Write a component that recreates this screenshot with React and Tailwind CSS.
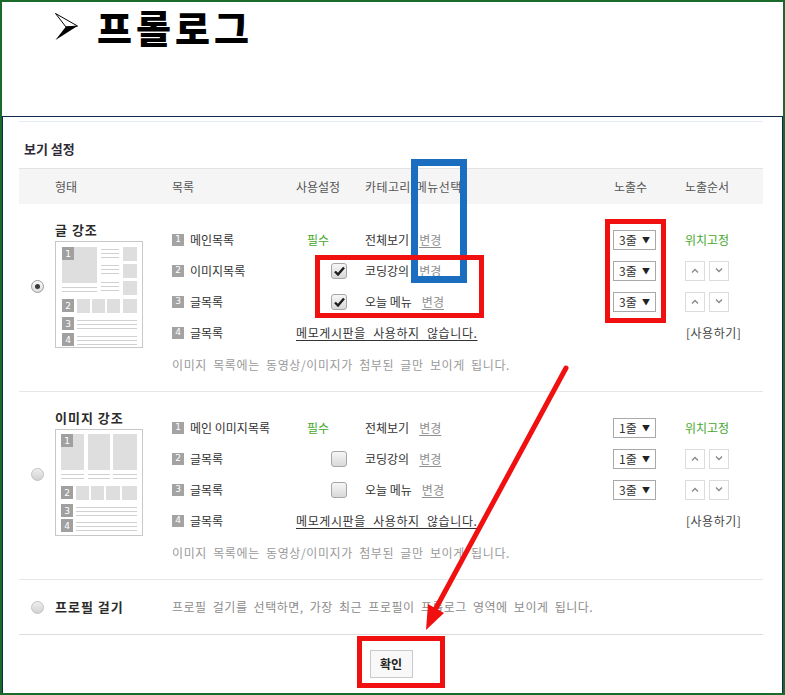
import React from 'react'

const KR = { fontFamily: '"Noto Sans CJK KR", "Noto Sans", sans-serif' }

const Badge = ({ n }) => (
  <span className='inline-flex items-center justify-center w-[12px] h-[12px] bg-[#a3a3a3] text-white text-[9px] leading-none mr-[6px] font-["DejaVu_Sans",sans-serif]'>{n}</span>
)

const Radio = ({ checked }) => (
  <span className={'flex items-center justify-center w-[13px] h-[13px] rounded-full border ' + (checked ? 'border-[#9c9c9c] bg-gradient-to-b from-[#fafafa] to-[#dcdcdc]' : 'border-[#c2c2c2] bg-gradient-to-b from-[#eeeeee] to-[#d2d2d2]')}>
    {checked && <span className='w-[5px] h-[5px] rounded-full bg-[#3a3a3a]'></span>}
  </span>
)

const Check = ({ checked }) => (
  <span className='flex items-center justify-center w-[16px] h-[16px] rounded-[3px] border border-[#a6a6a6] bg-gradient-to-b from-[#f6f6f6] to-[#d9d9d9]'>
    {checked && (
      <svg width='11' height='10' viewBox='0 0 11 10'>
        <path d='M1 5.5 L4 8.5 L10 1.5' fill='none' stroke='#1e1e1e' strokeWidth='2.4' />
      </svg>
    )}
  </span>
)

const Select = ({ v }) => (
  <span className='flex items-center justify-between w-[43px] h-[20px] border border-[#a9a9a9] bg-white px-[5px] text-[12px] text-[#333] leading-none'>
    {v}<span className='text-[8px] text-[#222]'>▼</span>
  </span>
)

const Chevron = ({ up }) => (
  <span className='flex items-center justify-center w-[20px] h-[20px] border border-[#dcdcdc] bg-white'>
    <svg width='8' height='5' viewBox='0 0 8 5'>
      <path d={up ? 'M1 4.5 L4 1.5 L7 4.5' : 'M1 0.5 L4 3.5 L7 0.5'} fill='none' stroke='#8a8a8a' strokeWidth='1.4' />
    </svg>
  </span>
)

const lines = (x1, x2, ys) => ys.map((y) => <line key={x1 + '-' + y} x1={x1} x2={x2} y1={y + 0.5} y2={y + 0.5} stroke='#d0d0d0' strokeWidth='1' />)

const B = ({ x, y, n }) => (
  <g>
    <rect x={x} y={y} width='12' height='13' fill='#a0a0a0' />
    <text x={x + 6} y={y + 10} fontSize='9' fill='#fff' textAnchor='middle' fontFamily='DejaVu Sans'>{n}</text>
  </g>
)

const ThumbText = () => (
  <svg width='88' height='107' viewBox='0 0 88 107'>
    <rect x='0.5' y='0.5' width='87' height='106' fill='#fff' stroke='#c8c8c8' />
    <rect x='7' y='6' width='35' height='36' fill='#dedede' />
    <B x={7} y={6} n='1' />
    {lines(7, 42, [46, 50])}
    {lines(46, 64, [8, 12, 16, 24, 28, 32, 41, 45, 49])}
    <rect x='68' y='6' width='14' height='14' fill='#dedede' />
    <rect x='68' y='23' width='14' height='14' fill='#dedede' />
    <rect x='68' y='40' width='14' height='14' fill='#dedede' />
    <B x={7} y={58} n='2' />
    <rect x='22' y='58' width='13' height='14' fill='#dedede' />
    <rect x='37' y='58' width='13' height='14' fill='#dedede' />
    <rect x='52' y='58' width='13' height='14' fill='#dedede' />
    <rect x='68' y='58' width='14' height='14' fill='#dedede' />
    <B x={7} y={76} n='3' />
    {lines(22, 82, [79, 83, 87])}
    <B x={7} y={92} n='4' />
    {lines(22, 82, [95, 99, 103])}
  </svg>
)

const ThumbImage = () => (
  <svg width='88' height='107' viewBox='0 0 88 107'>
    <rect x='0.5' y='0.5' width='87' height='106' fill='#fff' stroke='#c8c8c8' />
    <rect x='6' y='5' width='23' height='36' fill='#dedede' />
    <rect x='33' y='5' width='22' height='36' fill='#dedede' />
    <rect x='58' y='5' width='24' height='36' fill='#dedede' />
    <B x={6} y={5} n='1' />
    {lines(6, 29, [45, 49])}
    {lines(33, 55, [45, 49])}
    {lines(58, 82, [45, 49])}
    <B x={6} y={57} n='2' />
    <rect x='21' y='57' width='13' height='14' fill='#dedede' />
    <rect x='36' y='57' width='13' height='14' fill='#dedede' />
    <rect x='51' y='57' width='14' height='14' fill='#dedede' />
    <rect x='67' y='57' width='15' height='14' fill='#dedede' />
    <B x={6} y={75} n='3' />
    {lines(21, 82, [78, 82, 86])}
    <B x={6} y={90} n='4' />
    {lines(21, 82, [93, 97, 101])}
  </svg>
)

const Link = ({ children }) => <span className='ml-[10px] text-[#8f8f8f] underline underline-offset-2'>{children}</span>

const Row = ({ n, label, use, cat, count, order }) => (
  <div className='grid grid-cols-[124px_69px_248px_72px_77px] h-[31px] items-center'>
    <div className='flex items-center'><Badge n={n} />{label}</div>
    <div className='flex items-center'>{use}</div>
    <div className='flex items-center'>{cat}</div>
    <div className='flex items-center'>{count}</div>
    <div className='flex items-center'>{order}</div>
  </div>
)

const Order = () => (
  <div className='flex gap-[4px]'><Chevron up /><Chevron /></div>
)

const Memo = () => (
  <div className='grid grid-cols-[124px_389px_77px] h-[31px] items-center'>
    <div className='flex items-center'><Badge n='4' />글목록</div>
    <div className='underline underline-offset-2 text-[#333] tracking-[0.6px] [word-spacing:4px]'>메모게시판을 사용하지 않습니다.</div>
    <div className='pl-[1px] text-[#444] tracking-[0.5px]'>[사용하기]</div>
  </div>
)

const Section = ({ title, checked, thumb, rows }) => (
  <div className='flex border-b border-[#e6e6e6]'>
    <div className='w-[36px] pt-[76px] pl-[12px]'><Radio checked={checked} /></div>
    <div className='w-[117px] pt-[19px]'>
      <div className='text-[13px] font-bold leading-[14px] text-[#2b2b2b] tracking-[1px]'>{title}</div>
      <div className='mt-[4px]'>{thumb}</div>
    </div>
    <div className='pt-[20px] pb-[17px]'>
      {rows}
      <Memo />
      <div className='mt-[8px] leading-[18px] text-[#9a9a9a] tracking-[0.6px] [word-spacing:3px]'>이미지 목록에는 동영상/이미지가 첨부된 글만 보이게 됩니다.</div>
    </div>
  </div>
)

const Green = ({ children }) => <span className='text-[#46a82c]'>{children}</span>

export default function App() {
  return (
    <div style={KR} className='relative w-[785px] h-[695px] overflow-hidden bg-white border-2 border-[#1a6a2b]'>
      <div className='h-[114px] flex items-start pl-[53px]'>
        <div className='h-[50px] flex items-center'>
          <svg className='mr-[19px]' width='23' height='28' viewBox='0 0 23 28'>
            <polygon points='0.5,0.5 22.5,13 11,14' fill='#fff' stroke='#000' strokeWidth='1' strokeLinejoin='round' />
            <polygon points='11,13.5 22.5,13 0.5,27' fill='#000' />
          </svg>
          <span className='text-[38px] font-black leading-none text-black tracking-[4px]'>프롤로그</span>
        </div>
      </div>
      <div className='border-t border-l border-r border-[#10284a] h-[600px] pl-[16px] pr-[19px] pt-[4px] text-[12px] text-[#333]'>
        <div className='border-t border-[#e6ecf5] pt-[19px] pl-[5px] leading-[16px] text-[13px] font-bold text-[#2e2a36]'>보기 설정</div>
        <div className='mt-[11px] h-[36px] bg-[#f5f5f5] border-t border-[#e2e2e2] grid grid-cols-[36px_117px_124px_69px_248px_72px_77px] items-center text-[#555]'>
          <span></span><span>형태</span><span>목록</span><span>사용설정</span><span className='tracking-[0.4px]'>카테고리/메뉴선택</span><span className='pl-[1px]'>노출수</span><span>노출순서</span>
        </div>
        <Section
          title='글 강조'
          checked
          thumb={<ThumbText />}
          rows={<>
            <Row n='1' label='메인목록' use={<span className='pl-[11px]'><Green>필수</Green></span>} cat={<>전체보기<Link>변경</Link></>} count={<Select v='3줄' />} order={<Green>위치고정</Green>} />
            <Row n='2' label='이미지목록' use={<span className='pl-[35px]'><Check checked /></span>} cat={<>코딩강의<Link>변경</Link></>} count={<Select v='3줄' />} order={<Order />} />
            <Row n='3' label='글목록' use={<span className='pl-[35px]'><Check checked /></span>} cat={<>오늘 메뉴<Link>변경</Link></>} count={<Select v='3줄' />} order={<Order />} />
          </>}
        />
        <Section
          title='이미지 강조'
          thumb={<ThumbImage />}
          rows={<>
            <Row n='1' label='메인 이미지목록' use={<span className='pl-[11px]'><Green>필수</Green></span>} cat={<>전체보기<Link>변경</Link></>} count={<Select v='1줄' />} order={<Green>위치고정</Green>} />
            <Row n='2' label='글목록' use={<span className='pl-[35px]'><Check /></span>} cat={<>코딩강의<Link>변경</Link></>} count={<Select v='1줄' />} order={<Order />} />
            <Row n='3' label='글목록' use={<span className='pl-[35px]'><Check /></span>} cat={<>오늘 메뉴<Link>변경</Link></>} count={<Select v='3줄' />} order={<Order />} />
          </>}
        />
        <div className='flex items-center h-[55px] border-b border-[#dcdcdc]'>
          <div className='w-[36px] pl-[12px]'><Radio /></div>
          <div className='w-[117px] text-[13px] font-bold text-[#2b2b2b] tracking-[1px]'>프로필 걸기</div>
          <div className='text-[#8c8c8c] tracking-[0.5px] [word-spacing:3px]'>프로필 걸기를 선택하면, 가장 최근 프로필이 프롤로그 영역에 보이게 됩니다.</div>
        </div>
        <div className='flex justify-center pt-[15px]'>
          <button className='w-[43px] h-[28px] border border-[#c9c9c9] bg-[#f8f8f8] text-[12px] font-bold text-[#222]'>확인</button>
        </div>
      </div>

      <div className='absolute left-[-2px] top-[-2px] w-[785px] h-[695px] pointer-events-none'>
        <div className='absolute left-[411px] top-[159px] w-[56px] h-[124px] border-[7px] border-[#1b6dbf]'></div>
        <div className='absolute left-[315px] top-[255px] w-[169px] h-[63px] border-[5px] border-[#f01010]'></div>
        <div className='absolute left-[605px] top-[219px] w-[61px] h-[104px] border-[5px] border-[#f01010]'></div>
        <div className='absolute left-[357px] top-[636px] w-[88px] h-[52px] border-[5px] border-[#f01010]'></div>
        <svg className='absolute left-0 top-0' width='785' height='695'>
          <line x1='566' y1='368' x2='435' y2='610' stroke='#f01010' strokeWidth='5' strokeLinecap='round' />
          <polygon points='426,630 444,613 428,604' fill='#f01010' />
        </svg>
      </div>
    </div>
  )
}
